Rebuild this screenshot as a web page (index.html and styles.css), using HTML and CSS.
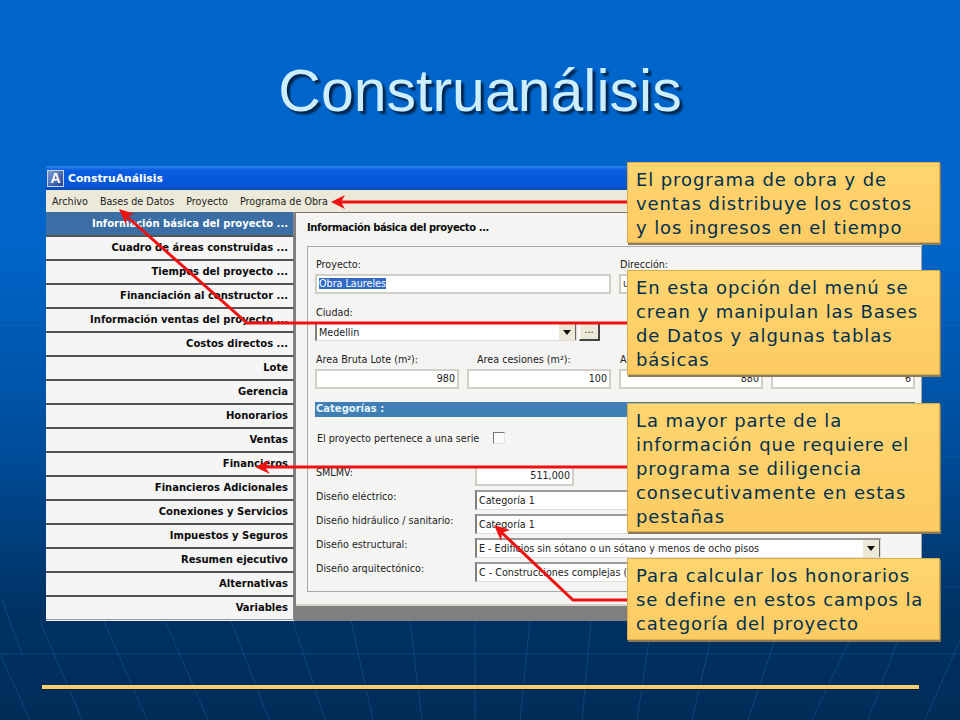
FILE: index.html
```html
<!DOCTYPE html>
<html lang="es">
<head>
    <meta charset="UTF-8">
    <meta name="viewport" content="width=device-width, initial-scale=1.0">
    <title>Construanálisis</title>
    <link rel="stylesheet" href="styles.css">
</head>
<body>
    <div class="slide">
        <svg class="backdrop" width="960" height="720" viewBox="0 0 960 720">
            <g class="backdrop-lines">
                <path d="M0 654H960"/>
                <path d="M0 262H46M922 262H960M0 325H46M922 325H960M922 457H960M922 587H960"/>
                <path d="M82 720L40 621M147 720L104 621M208 720L165 621M269 720L231 621M325 720L293 621M373 720L351 621M422 720L410 621M475 720V621M520 720L530 621M582 720L591 621M637 720L652 621M692 720L715 621M748 720L775 640M812 720L850 640M868 720L905 621M925 720L960 640"/>
                <path d="M0 654L30 720M2 600L22 654M935 640L922 621"/>
            </g>
        </svg>

        <h1 class="slide-title">Construanálisis</h1>

        <div class="window">
            <div class="titlebar">
                <span class="app-icon">A</span>
                <span>ConstruAnálisis</span>
            </div>
            <div class="menubar">
                <span>Archivo</span>
                <span>Bases de Datos</span>
                <span>Proyecto</span>
                <span>Programa de Obra</span>
            </div>
            <div class="window-body">
                <div class="tabs">
                    <div class="tab active">Información básica del proyecto ...</div>
                    <div class="tab">Cuadro de áreas construidas ...</div>
                    <div class="tab">Tiempos del proyecto ...</div>
                    <div class="tab">Financiación al constructor ...</div>
                    <div class="tab">Información ventas del proyecto ...</div>
                    <div class="tab">Costos directos ...</div>
                    <div class="tab">Lote</div>
                    <div class="tab">Gerencia</div>
                    <div class="tab">Honorarios</div>
                    <div class="tab">Ventas</div>
                    <div class="tab">Financieros</div>
                    <div class="tab">Financieros Adicionales</div>
                    <div class="tab">Conexiones y Servicios</div>
                    <div class="tab">Impuestos y Seguros</div>
                    <div class="tab">Resumen ejecutivo</div>
                    <div class="tab">Alternativas</div>
                    <div class="tab">Variables</div>
                </div>
                <div class="main">
                    <div class="panel">
                        <h2 class="panel-title">Información básica del proyecto ...</h2>
                        <div class="group">
                            <div class="field-grid">
                                <div class="field span-2">
                                    <label>Proyecto:</label>
                                    <div class="input"><span class="selected">Obra Laureles</span></div>
                                </div>
                                <div class="field span-2">
                                    <label>Dirección:</label>
                                    <div class="input">u</div>
                                </div>
                                <div class="field span-2">
                                    <label>Ciudad:</label>
                                    <div class="combo-row">
                                        <div class="combo city">Medellin<span class="combo-btn"></span></div>
                                        <div class="more-btn">...</div>
                                    </div>
                                </div>
                                <div class="field span-2"></div>
                                <div class="field">
                                    <label>Area Bruta Lote (m²):</label>
                                    <div class="input number">980</div>
                                </div>
                                <div class="field">
                                    <label class="indent">Area cesiones (m²):</label>
                                    <div class="input number">100</div>
                                </div>
                                <div class="field">
                                    <label>A</label>
                                    <div class="input number">880</div>
                                </div>
                                <div class="field">
                                    <label></label>
                                    <div class="input number">6</div>
                                </div>
                            </div>

                            <div class="section-bar">Categorías :</div>

                            <div class="series-row">
                                <span>El proyecto pertenece a una serie</span>
                                <span class="checkbox"></span>
                            </div>

                            <div class="category-grid">
                                <label>SMLMV:</label>
                                <div class="input number smlmv">511,000</div>
                                <label>Diseño eléctrico:</label>
                                <div class="combo">Categoría 1<span class="combo-btn"></span></div>
                                <label>Diseño hidráulico / sanitario:</label>
                                <div class="combo">Categoría 1<span class="combo-btn"></span></div>
                                <label>Diseño estructural:</label>
                                <div class="combo">E - Edificios sin sótano o un sótano y menos de ocho pisos<span class="combo-btn"></span></div>
                                <label>Diseño arquitectónico:</label>
                                <div class="combo">C - Construcciones complejas (<span class="combo-btn"></span></div>
                            </div>
                        </div>
                    </div>
                </div>
            </div>
        </div>

        <div class="rule"></div>

        <svg class="arrows" width="960" height="720" viewBox="0 0 960 720">
            <path d="M630 202H338"/>
            <path d="M630 323H247L124 214"/>
            <path d="M630 467H262"/>
            <path d="M630 600H573L500 531"/>
            <polygon points="331,202 345,195 341,202 345,209"/>
            <polygon points="119,209 135,214 127,216 126,225"/>
            <polygon points="255,467 270,460 265,467 270,474"/>
            <polygon points="494,525 510,530 502,533 501,541"/>
        </svg>

        <div class="callout callout-1">El programa de obra y de<br>ventas distribuye los costos<br>y los ingresos en el tiempo</div>
        <div class="callout callout-2">En esta opción del menú se<br>crean y manipulan las Bases<br>de Datos y algunas tablas<br>básicas</div>
        <div class="callout callout-3">La mayor parte de la<br>información que requiere el<br>programa se diligencia<br>consecutivamente en estas<br>pestañas</div>
        <div class="callout callout-4">Para calcular los honorarios<br>se define en estos campos la<br>categoría del proyecto</div>
    </div>
</body>
</html>
```

FILE: styles.css
```css
* {
    margin: 0;
    padding: 0;
    box-sizing: border-box;
}

body {
    width: 960px;
    height: 720px;
    overflow: hidden;
    font-family: "DejaVu Sans", sans-serif;
}

.slide {
    position: relative;
    width: 960px;
    height: 720px;
    overflow: hidden;
    background: linear-gradient(180deg, #0066cc 0%, #0064c8 35%, #004d9b 62%, #003263 85%, #002c58 100%);
}

.backdrop {
    position: absolute;
    left: 0;
    top: 0;
}

.backdrop-lines path {
    fill: none;
    stroke: #2a6fb5;
    stroke-width: 1;
    opacity: 0.35;
}

.slide-title {
    position: relative;
    height: 166px;
    padding-top: 56px;
    text-align: center;
    font-family: "Liberation Sans", sans-serif;
    font-size: 59px;
    font-weight: normal;
    line-height: 70px;
    color: #cceeff;
    text-shadow: 3px 3px 2px #00264d;
}

/* program window */
.window {
    position: relative;
    width: 876px;
    height: 455px;
    margin-left: 46px;
    background: #808080;
    display: flex;
    flex-direction: column;
}

.titlebar {
    height: 24px;
    display: flex;
    align-items: center;
    gap: 4px;
    padding: 1px 0 0 1px;
    background: linear-gradient(180deg, #2a86f0 0%, #0a5ce0 18%, #0556d8 80%, #0a49b8 100%);
    color: #fff;
    font-size: 10.8px;
    font-weight: bold;
}

.app-icon {
    width: 17px;
    height: 17px;
    background: linear-gradient(135deg, #7f9ad0, #1f4594);
    border: 1px solid #c8d4ec;
    font-family: "Liberation Sans", sans-serif;
    font-size: 14px;
    line-height: 15px;
    text-align: center;
}

.menubar {
    height: 22px;
    display: flex;
    align-items: center;
    gap: 12px;
    padding-left: 6px;
    background: #ece9d8;
    color: #222;
    font-size: 9.6px;
}

.window-body {
    flex: 1;
    display: flex;
}

.tabs {
    flex-shrink: 0;
    width: 248px;
    display: flex;
    flex-direction: column;
    background: #f5f5f5;
}

.tab {
    height: 24px;
    padding-right: 5px;
    background: #f5f5f5;
    border-bottom: 2px solid #555;
    border-right: 1px solid #888;
    color: #0a0a0a;
    font-size: 10px;
    font-weight: bold;
    line-height: 22px;
    text-align: right;
}

.tab:last-child {
    height: 23px;
    border-bottom: 1px solid #999;
}

.tab.active {
    height: 25px;
    background: #3a6ea5;
    color: #fff;
    line-height: 24px;
}

.main {
    flex: 1;
    min-width: 0;
    height: 409px;
    background: #808080;
}

.panel {
    height: 394px;
    margin-left: 2px;
    padding: 0 0 14px 11px;
    background: #f4f4f2;
    border-top: 1px solid #777;
    border-bottom: 2px solid #d8d6c8;
}

.panel-title {
    height: 33px;
    font-size: 10px;
    font-weight: bold;
    line-height: 29px;
    color: #0a0a0a;
    letter-spacing: -0.4px;
}

.group {
    height: 346px;
    padding: 11px 6px 0 7px;
    border: 1px solid #a8a8a8;
    font-size: 9.6px;
    color: #222;
}

.field-grid {
    display: grid;
    grid-template-columns: repeat(4, 144px);
    column-gap: 8px;
    row-gap: 12px;
}

.field label {
    display: block;
    height: 14px;
    margin-bottom: 2px;
    padding-left: 1px;
    line-height: 14px;
}

.field label.indent {
    padding-left: 10px;
}

.span-2 {
    grid-column: span 2;
}

.input {
    height: 20px;
    padding: 0 2px;
    background: #fff;
    border: 2px solid #cfcfc8;
    line-height: 16px;
    white-space: nowrap;
    overflow: hidden;
}

.input.number {
    text-align: right;
}

.selected {
    background: #316ac5;
    color: #fff;
}

.combo-row {
    display: flex;
    gap: 2px;
}

.combo {
    position: relative;
    height: 20px;
    padding-left: 2px;
    background: #fff;
    border-left: 2px solid #808080;
    border-top: 2px solid #9a9a94;
    border-right: 1px solid #ddd;
    border-bottom: 1px solid #ddd;
    line-height: 17px;
    white-space: nowrap;
    overflow: hidden;
}

.combo.city {
    width: 262px;
    height: 19px;
}

.combo-btn {
    position: absolute;
    right: 0;
    top: 0;
    width: 17px;
    height: 18px;
    background: #ece9d8;
    border-right: 1px solid #666;
    border-bottom: 1px solid #666;
}

.combo-btn::after {
    content: "";
    position: absolute;
    left: 4px;
    top: 6px;
    border-left: 4px solid transparent;
    border-right: 4px solid transparent;
    border-top: 5px solid #111;
}

.more-btn {
    width: 21px;
    height: 19px;
    background: #ece9d8;
    border: 1px solid #fff;
    border-right: 2px solid #444;
    border-bottom: 2px solid #444;
    line-height: 14px;
    text-align: center;
}

.section-bar {
    height: 15px;
    margin-top: 13px;
    padding-left: 1px;
    background: #3f7fb5;
    color: #e8f4ff;
    font-size: 10px;
    font-weight: bold;
    line-height: 14px;
}

.series-row {
    display: flex;
    align-items: center;
    gap: 14px;
    height: 14px;
    margin-top: 14px;
    padding-left: 2px;
}

.checkbox {
    width: 12px;
    height: 12px;
    background: #fafafa;
    border-left: 1px solid #777;
    border-top: 1px solid #777;
    border-right: 1px solid #e4e4e4;
    border-bottom: 1px solid #e4e4e4;
}

.category-grid {
    display: grid;
    grid-template-columns: 160px 406px;
    grid-auto-rows: 24px;
    margin-top: 21px;
}

.category-grid label {
    padding-left: 1px;
    line-height: 14px;
}

.smlmv {
    width: 99px;
}

.rule {
    position: absolute;
    left: 42px;
    top: 685px;
    width: 877px;
    height: 4px;
    background: #f8cc70;
    box-shadow: 0 1px 0 #0b1c30;
}

/* annotations over the screenshot */
.arrows {
    position: absolute;
    left: 0;
    top: 0;
}

.arrows path {
    fill: none;
    stroke: #ee1111;
    stroke-width: 3;
}

.arrows polygon {
    fill: #ee1111;
}

.callout {
    position: absolute;
    left: 627px;
    width: 313px;
    padding: 5px 0 0 8px;
    background: linear-gradient(180deg, #ffd56f, #fdcb63);
    border: 1px solid #d9ac4c;
    box-shadow: 1px 2px 0 #8a7a55;
    color: #003050;
    font-size: 18px;
    letter-spacing: 0.9px;
    line-height: 24px;
    white-space: nowrap;
}

.callout-1 {
    top: 162px;
    height: 81px;
}

.callout-2 {
    top: 270px;
    height: 105px;
}

.callout-3 {
    top: 403px;
    height: 129px;
}

.callout-4 {
    top: 558px;
    height: 82px;
}
```
